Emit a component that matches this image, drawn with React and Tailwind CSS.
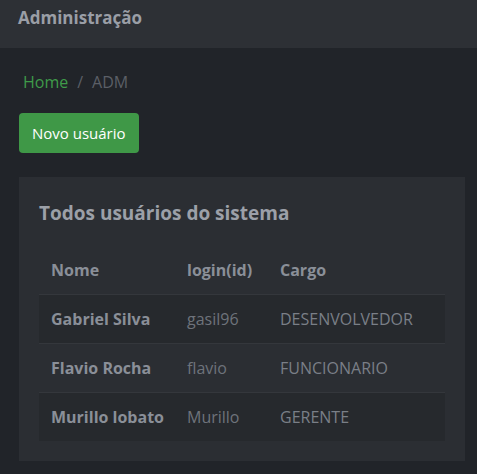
import React from "react";

const users = [
  { name: "Gabriel Silva", login: "gasil96", cargo: "DESENVOLVEDOR" },
  { name: "Flavio Rocha", login: "flavio", cargo: "FUNCIONARIO" },
  { name: "Murillo lobato", login: "Murillo", cargo: "GERENTE" },
];

const App = () => {
  return (
    <div className="min-h-[474px] bg-[#212429] font-['Open_Sans',sans-serif] text-[#8a8f98]">
      {/* Top bar */}
      <header className="h-12 bg-[#2d3035] px-[18px] flex items-center">
        <h1 className="text-[17px] font-bold text-[#9a9ea6] -mt-[12px]">Administração</h1>
      </header>

      <main className="pl-[19px] pr-[12px] pt-[24px]">
        {/* Breadcrumb */}
        <nav className="pl-1 flex items-center gap-[9px] text-[16px] leading-[20px]">
          <span className="text-[#3f9b49]">Home</span>
          <span className="text-[#5b5f66]">/</span>
          <span className="text-[#5b5f66]">ADM</span>
        </nav>

        <button className="mt-[21px] h-10 px-[13px] rounded bg-[#3f9847] text-white text-[15px]">
          Novo usuário
        </button>

        {/* Users card */}
        <section className="mt-[24px] bg-[#2b2e33] px-5 pt-[25px] pb-5">
          <h2 className="text-[19px] font-bold text-[#9ca0a8] leading-[22px]">
            Todos usuários do sistema
          </h2>
          <table className="mt-[22px] w-full text-[16px] border-collapse">
            <thead>
              <tr className="h-12 text-left text-[#8a8f98]">
                <th className="pl-3 w-[148px] font-bold">Nome</th>
                <th className="w-[93px] font-bold">login(id)</th>
                <th className="font-bold">Cargo</th>
              </tr>
            </thead>
            <tbody>
              {users.map((u, i) => (
                <tr
                  key={u.login}
                  className={`h-[49px] border-t border-[#34373c] ${i % 2 === 0 ? "bg-[#26292d]" : ""}`}
                >
                  <td className="pl-3 font-bold text-[#8a8f98]">{u.name}</td>
                  <td className="text-[#6e737b]">{u.login}</td>
                  <td className="text-[#7a7f87]">{u.cargo}</td>
                </tr>
              ))}
            </tbody>
          </table>
        </section>
      </main>
    </div>
  );
};

export default App;
